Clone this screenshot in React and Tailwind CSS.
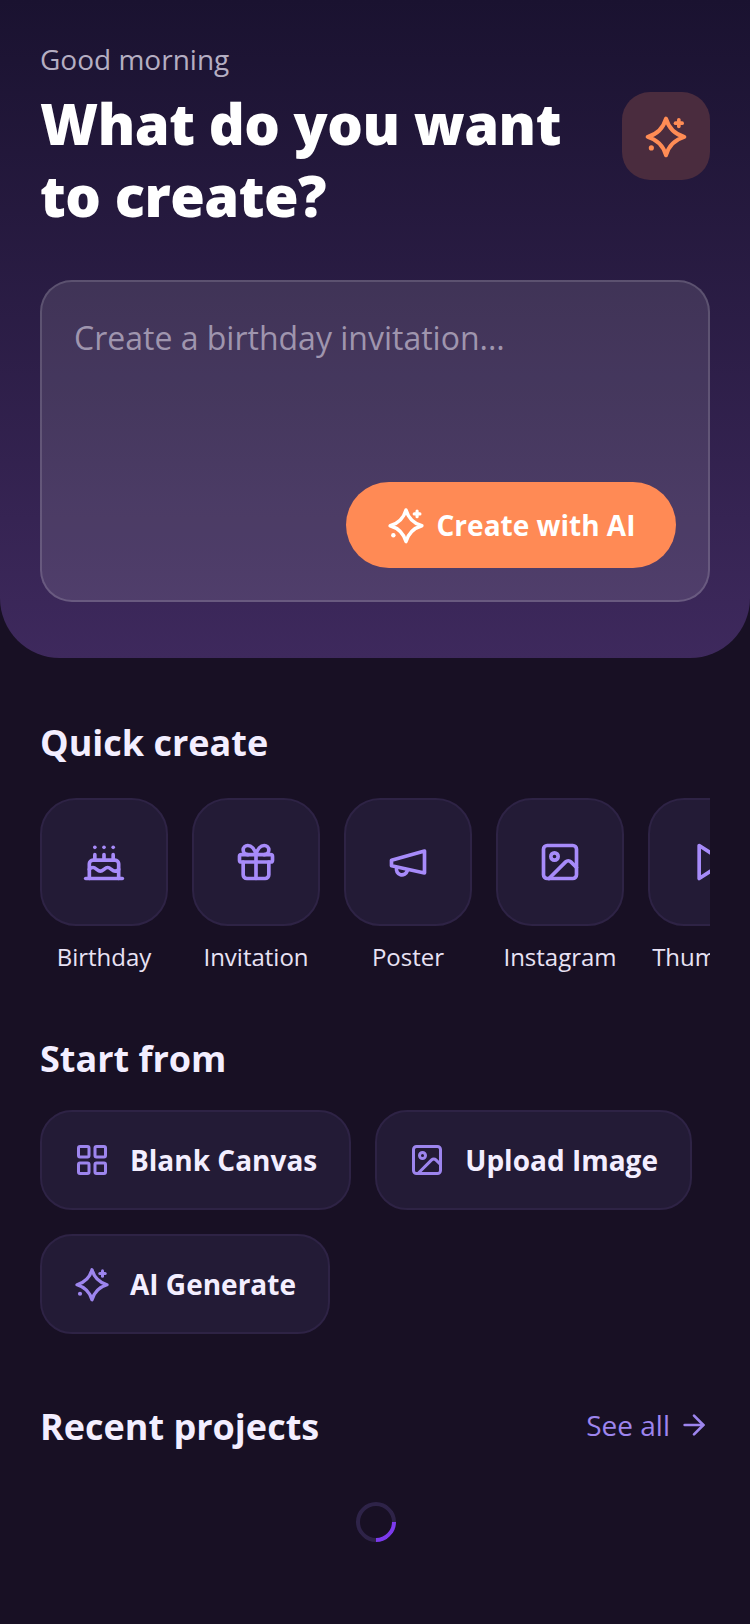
import React from "react";
import { Cake, Gift, Image, LayoutGrid, ArrowRight } from "lucide-react";

const Sparkle = ({ size = 44, className = "" }) => (
  <svg width={size} height={size} viewBox="0 0 24 24" fill="none" stroke="currentColor" strokeWidth="2" strokeLinecap="round" strokeLinejoin="round" className={className}>
    <path strokeWidth="2.2" d="M12 2.5 Q14.2 10.2 22 12.5 Q14.2 14.8 12 22.5 Q9.8 14.8 2 12.5 Q9.8 10.2 12 2.5Z" />
    <path d="M19 3.2v3.6" />
    <path d="M17.2 5h3.6" />
    <path d="M4 18.5h.01" strokeWidth="2.8" />
  </svg>
);

const Megaphone = ({ size = 44, className = "" }) => (
  <svg width={size} height={size} viewBox="0 0 24 24" fill="none" stroke="currentColor" strokeWidth="2" strokeLinecap="round" strokeLinejoin="round" className={className}>
    <path d="m3 11 18-5v12L3 14v-3z" />
    <path d="M11.6 16.8a3 3 0 1 1-5.8-1.6" />
  </svg>
);

const Play = ({ size = 44, className = "" }) => (
  <svg width={size} height={size} viewBox="0 0 24 24" fill="none" stroke="currentColor" strokeWidth="2" strokeLinecap="round" strokeLinejoin="round" className={className}>
    <polygon points="5 3 19 12 5 21 5 3" />
  </svg>
);

const quick = [
  { label: "Birthday", Icon: Cake },
  { label: "Invitation", Icon: Gift },
  { label: "Poster", Icon: Megaphone },
  { label: "Instagram", Icon: Image },
  { label: "Thumbnail", Icon: Play },
];

const StartButton = ({ Icon, label }) => (
  <button className="flex h-[100px] items-center gap-5 rounded-[32px] border-2 border-[#2e2345] bg-[#231b36] px-[32px] text-[28px] font-bold text-[#f3eeff]">
    <Icon size={36} className="text-[#9d85ee]" />
    <span>{label}</span>
  </button>
);

export default function App() {
  return (
    <div className="min-h-[1624px] bg-[#181024] font-['Open_Sans',sans-serif]">
      <header className="rounded-b-[60px] bg-gradient-to-b from-[#1a1230] to-[#3e295d] px-10 pb-14 pt-10">
        <div className="flex items-start justify-between">
          <div>
            <p className="text-[28px] leading-[38px] text-[#b5aec2]">Good morning</p>
            <h1 className="mt-[9px] text-[56px] font-extrabold leading-[72px] tracking-[-0.45px] text-white">
              What do you want
              <br />
              to create?
            </h1>
          </div>
          <div className="mt-[52px] flex h-[88px] w-[88px] items-center justify-center rounded-[28px] bg-[#4a2c3e]">
            <Sparkle size={44} className="text-[#ff8c55]" />
          </div>
        </div>
        <div className="mt-[49px] flex h-[322px] flex-col justify-between rounded-[32px] border-2 border-white/15 bg-white/[0.11] p-8">
          <p className="text-[32px] leading-[48px] text-[#9f95ae]">Create a birthday invitation...</p>
          <div className="flex justify-end">
            <button className="flex h-[86px] w-[330px] items-center justify-center gap-3 rounded-full bg-[#ff8a55] text-[28px] font-bold text-white">
              <Sparkle size={38} />
              <span>Create with AI</span>
            </button>
          </div>
        </div>
      </header>

      <main className="px-10">
        <section className="mt-[60px]">
          <h2 className="text-[36px] font-bold leading-[50px] text-[#f3eeff]">Quick create</h2>
          <div className="mt-[30px] flex gap-6 overflow-hidden">
            {quick.map(({ label, Icon }) => (
              <div key={label} className="flex w-[128px] shrink-0 flex-col items-center">
                <div className="flex h-[128px] w-[128px] items-center justify-center rounded-[36px] border-2 border-[#2e2345] bg-[#231b36]">
                  <Icon size={44} className="text-[#a78bfa]" />
                </div>
                <span className="mt-[15px] whitespace-nowrap text-[24px] leading-[32px] text-[#e8e2f4]">{label}</span>
              </div>
            ))}
          </div>
        </section>

        <section className="mt-[61px]">
          <h2 className="text-[36px] font-bold leading-[50px] text-[#f3eeff]">Start from</h2>
          <div className="mt-[26px] flex flex-wrap gap-6">
            <StartButton Icon={LayoutGrid} label="Blank Canvas" />
            <StartButton Icon={Image} label="Upload Image" />
            <StartButton Icon={Sparkle} label="AI Generate" />
          </div>
        </section>

        <section className="mt-[68px]">
          <div className="flex items-center justify-between">
            <h2 className="text-[36px] font-bold leading-[50px] text-[#f3eeff]">Recent projects</h2>
            <a className="mb-1 flex items-center gap-2 text-[28px] text-[#9d85ee]">
              See all
              <ArrowRight size={32} />
            </a>
          </div>
          <div className="mt-[50px] flex justify-center">
            <div className="ml-0.5 h-10 w-10 rotate-[45deg] rounded-full border-4 border-[#2e2348] border-r-[#7c3aed]" />
          </div>
        </section>
      </main>
    </div>
  );
}
